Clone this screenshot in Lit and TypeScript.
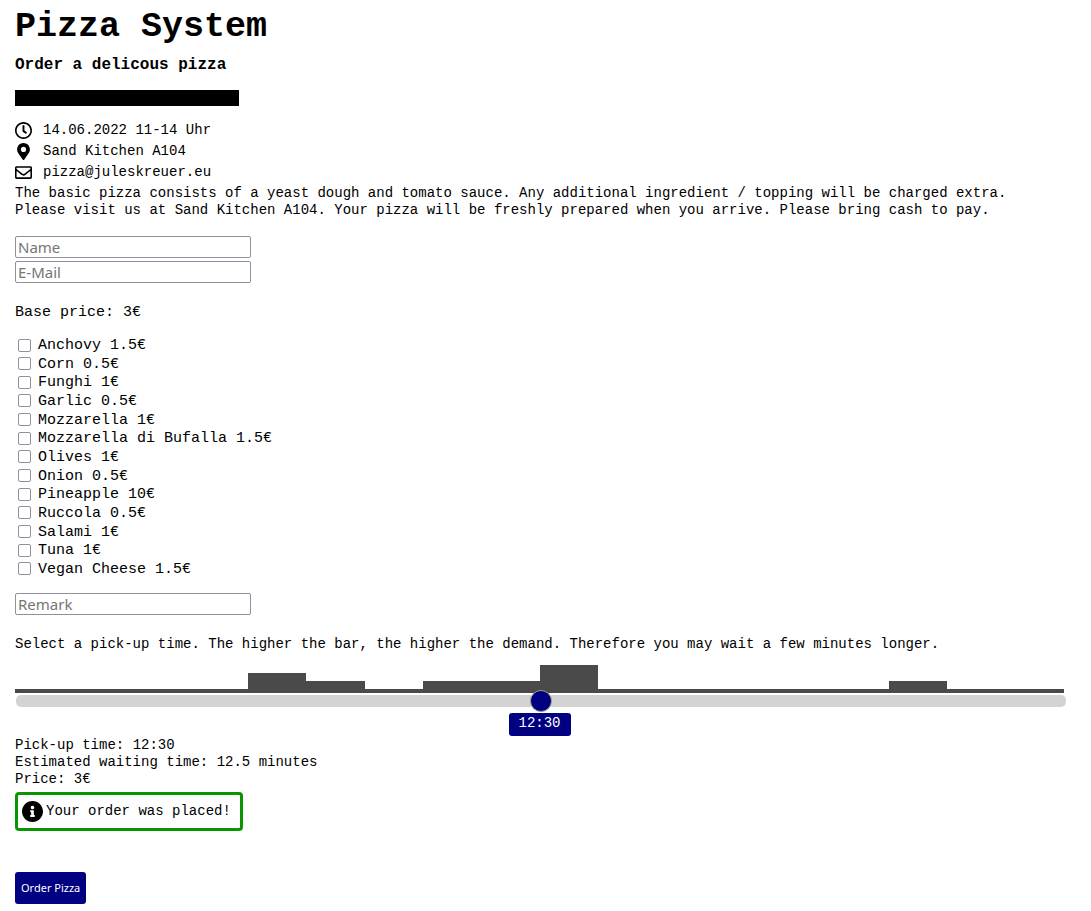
import { LitElement, html, css } from "lit";
import { customElement, state } from "lit/decorators.js";

interface Topping {
  name: string;
  price: number;
}

const BASE_PRICE = 3;
const OPENING_MINUTES = 11 * 60;
const SLOT_MINUTES = 10;
const WAITING_MINUTES = 12.5;

const TOPPINGS: Topping[] = [
  { name: "Anchovy", price: 1.5 },
  { name: "Corn", price: 0.5 },
  { name: "Funghi", price: 1 },
  { name: "Garlic", price: 0.5 },
  { name: "Mozzarella", price: 1 },
  { name: "Mozzarella di Bufalla", price: 1.5 },
  { name: "Olives", price: 1 },
  { name: "Onion", price: 0.5 },
  { name: "Pineapple", price: 10 },
  { name: "Ruccola", price: 0.5 },
  { name: "Salami", price: 1 },
  { name: "Tuna", price: 1 },
  { name: "Vegan Cheese", price: 1.5 },
];

// Orders already placed in each ten-minute slot.
const DEMAND = [0, 0, 0, 0, 2, 1, 0, 1, 1, 3, 0, 0, 0, 0, 0, 1, 0, 0];

const clockIcon = html`<svg class="icon" viewBox="8 8 496 496" aria-hidden="true">
  <path d="M256 8C119 8 8 119 8 256s111 248 248 248 248-111 248-248S393 8 256 8zm0 448c-110.5 0-200-89.5-200-200S145.5 56 256 56s200 89.5 200 200-89.5 200-200 200zm61.8-104.4l-84.9-61.7c-3.1-2.3-4.9-5.9-4.9-9.7V116c0-6.6 5.4-12 12-12h32c6.6 0 12 5.4 12 12v141.7l66.8 48.6c5.4 3.9 6.5 11.4 2.6 16.8L334.6 349c-3.9 5.3-11.4 6.5-16.8 2.6z"/>
</svg>`;

const markerIcon = html`<svg class="icon" viewBox="0 0 384 512" aria-hidden="true">
  <path d="M172.268 501.67C26.97 291.031 0 269.413 0 192 0 85.961 85.961 0 192 0s192 85.961 192 192c0 77.413-26.97 99.031-172.268 309.67-9.535 13.774-29.93 13.773-39.464 0zM192 272c44.183 0 80-35.817 80-80s-35.817-80-80-80-80 35.817-80 80 35.817 80 80 80z"/>
</svg>`;

const envelopeIcon = html`<svg class="icon" viewBox="0 0 512 512" aria-hidden="true">
  <path d="M464 64H48C21.49 64 0 85.49 0 112v288c0 26.51 21.49 48 48 48h416c26.51 0 48-21.49 48-48V112c0-26.51-21.49-48-48-48zm0 48v40.805c-22.422 18.259-58.168 46.651-134.587 106.49-16.841 13.247-50.201 45.072-73.413 44.701-23.208.375-56.579-31.459-73.413-44.701C106.18 199.465 70.425 171.067 48 152.805V112h416zM48 400V214.398c22.914 18.251 55.409 43.862 104.938 82.646 21.857 17.205 60.134 55.186 103.062 54.955 42.717.231 80.509-37.199 103.053-54.947 49.528-38.783 82.032-64.401 104.947-82.653V400H48z"/>
</svg>`;

const infoIcon = html`<svg class="icon large" viewBox="8 8 496 496" aria-hidden="true">
  <path d="M256 8C119.043 8 8 119.083 8 256c0 136.997 111.043 248 248 248s248-111.003 248-248C504 119.083 392.957 8 256 8zm0 110c23.196 0 42 18.804 42 42s-18.804 42-42 42-42-18.804-42-42 18.804-42 42-42zm56 254c0 6.627-5.373 12-12 12h-88c-6.627 0-12-5.373-12-12v-24c0-6.627 5.373-12 12-12h12v-64h-12c-6.627 0-12-5.373-12-12v-24c0-6.627 5.373-12 12-12h64c6.627 0 12 5.373 12 12v100h12c6.627 0 12 5.373 12 12v24z"/>
</svg>`;

@customElement("app-root")
export class AppRoot extends LitElement {
  @state() private slotIndex = 9;
  @state() private chosen: string[] = [];

  static styles = css`
    :host {
      display: block;
      box-sizing: border-box;
      padding: 7px 25px 7px 15px;
      background: #fff;
      color: #000;
      font-family: "Liberation Mono", monospace;
      font-size: 14px;
      line-height: 17px;
    }
    h1,
    h2,
    p,
    ul {
      margin: 0;
      padding: 0;
    }
    h1 {
      font-size: 35px;
      line-height: 40px;
    }
    h2 {
      margin-top: 8px;
      font-size: 16px;
      line-height: 20px;
    }
    .divider {
      width: 224px;
      max-width: 100%;
      height: 16px;
      margin: 15px 0 14px;
      background: #000;
    }
    .facts {
      list-style: none;
    }
    .facts li {
      display: flex;
      align-items: center;
      gap: 11px;
      height: 21px;
    }
    .facts a {
      color: inherit;
      text-decoration: none;
    }
    .icon {
      flex: none;
      width: 17px;
      height: 17px;
      fill: currentColor;
    }
    .icon.large {
      width: 21px;
      height: 21px;
    }
    .intro {
      margin-top: 2px;
    }
    .fields {
      display: flex;
      flex-direction: column;
      align-items: flex-start;
      gap: 3px;
      margin-top: 17px;
    }
    .toppings + .fields {
      margin-top: 14px;
    }
    .field {
      box-sizing: border-box;
      width: 236px;
      max-width: 100%;
      height: 22px;
      padding: 0 2px;
      border: 1px solid #8f8f9d;
      border-radius: 2px;
      background: #fff;
      color: #000;
      font-family: "Noto Sans", sans-serif;
      font-size: 15px;
    }
    .field::placeholder {
      color: #757575;
      opacity: 1;
    }
    .base {
      margin-top: 21px;
      font-size: 15px;
      line-height: 18px;
    }
    .toppings {
      display: flex;
      flex-direction: column;
      justify-content: space-between;
      min-height: 242px;
      margin-top: 15px;
      font-size: 15px;
      line-height: 18px;
      list-style: none;
    }
    .toppings label {
      display: inline-flex;
      align-items: center;
      gap: 7px;
      padding-left: 3px;
      vertical-align: top;
    }
    .toppings input {
      appearance: none;
      box-sizing: border-box;
      width: 13px;
      height: 13px;
      margin: 0 0 2px;
      border: 1px solid #8f8f9d;
      border-radius: 2px;
      background: #fff;
    }
    .toppings input:checked {
      border-color: navy;
      background: navy;
    }
    .prompt {
      display: block;
      margin-top: 21px;
    }
    .picker {
      position: relative;
      margin: 12px 2px 0 0;
      padding-bottom: 24px;
    }
    .chart {
      display: grid;
      grid-auto-flow: column;
      grid-auto-columns: 1fr;
      align-items: end;
      height: 28px;
    }
    .bar {
      background: #4a4a4a;
    }
    .slider {
      appearance: none;
      display: block;
      box-sizing: border-box;
      width: calc(100% + 1px);
      height: 22px;
      margin: -3px 0 0 1px;
      background: transparent;
      position: relative;
    }
    .slider::-webkit-slider-runnable-track {
      height: 12px;
      border-radius: 5px;
      background: lightgray;
    }
    .slider::-webkit-slider-thumb {
      appearance: none;
      box-sizing: border-box;
      width: 22px;
      height: 22px;
      margin-top: -5px;
      border: 1px solid #999;
      border-radius: 50%;
      background: navy;
    }
    .bubble {
      position: absolute;
      bottom: 0;
      box-sizing: border-box;
      min-width: 62px;
      padding: 2px 9px 4px;
      border-radius: 3px;
      background: navy;
      color: #fff;
      text-align: center;
      transform: translateX(-50%);
    }
    .summary {
      margin-top: 1px;
    }
    .notice {
      display: inline-flex;
      align-items: center;
      gap: 3px;
      box-sizing: border-box;
      min-height: 39px;
      margin-top: 4px;
      padding: 0 9px 0 4px;
      border: 3px solid #0a9600;
      border-radius: 4px;
    }
    .order {
      display: block;
      height: 32px;
      margin-top: 41px;
      padding: 0 6px 2px;
      border: 0;
      border-radius: 3px;
      background: navy;
      color: #fff;
      font-family: "Noto Sans", sans-serif;
      font-size: 11px;
    }
  `;

  private get pickupTime(): string {
    const minutes = OPENING_MINUTES + this.slotIndex * SLOT_MINUTES;
    return `${Math.floor(minutes / 60)}:${String(minutes % 60).padStart(2, "0")}`;
  }

  private get total(): number {
    return TOPPINGS.filter((t) => this.chosen.includes(t.name)).reduce(
      (sum, t) => sum + t.price,
      BASE_PRICE,
    );
  }

  private toggle(name: string) {
    this.chosen = this.chosen.includes(name)
      ? this.chosen.filter((n) => n !== name)
      : [...this.chosen, name];
  }

  private onSlide(event: Event) {
    this.slotIndex = Number((event.target as HTMLInputElement).value);
  }

  render() {
    return html`
      <header>
        <h1>Pizza System</h1>
        <h2>Order a delicous pizza</h2>
        <div class="divider"></div>
        <ul class="facts">
          <li>${clockIcon}<span>14.06.2022 11-14 Uhr</span></li>
          <li>${markerIcon}<span>Sand Kitchen A104</span></li>
          <li>${envelopeIcon}<a href="mailto:pizza@juleskreuer.eu">pizza@juleskreuer.eu</a></li>
        </ul>
        <p class="intro">
          The basic pizza consists of a yeast dough and tomato sauce. Any additional ingredient /
          topping will be charged extra.<br />
          Please visit us at Sand Kitchen A104. Your pizza will be freshly prepared when you
          arrive. Please bring cash to pay.
        </p>
      </header>
      <form @submit=${(e: Event) => e.preventDefault()}>
        <div class="fields">
          <input class="field" type="text" placeholder="Name" aria-label="Name" />
          <input class="field" type="email" placeholder="E-Mail" aria-label="E-Mail" />
        </div>
        <p class="base">Base price: ${BASE_PRICE}€</p>
        <ul class="toppings">
          ${TOPPINGS.map(
            (t) => html`<li>
              <label
                ><input
                  type="checkbox"
                  .checked=${this.chosen.includes(t.name)}
                  @change=${() => this.toggle(t.name)}
                /><span>${t.name} ${t.price}€</span></label
              >
            </li>`,
          )}
        </ul>
        <div class="fields">
          <input class="field" type="text" placeholder="Remark" aria-label="Remark" />
        </div>
        <label class="prompt" for="pickup"
          >Select a pick-up time. The higher the bar, the higher the demand. Therefore you may wait
          a few minutes longer.</label
        >
        <div class="picker">
          <div class="chart">
            ${DEMAND.map((n) => html`<div class="bar" style="height:${4 + n * 8}px"></div>`)}
          </div>
          <input
            class="slider"
            id="pickup"
            type="range"
            min="0"
            max=${DEMAND.length}
            .value=${String(this.slotIndex)}
            @input=${this.onSlide}
          />
          <output
            class="bubble"
            for="pickup"
            style="left:${(this.slotIndex / DEMAND.length) * 100}%"
            >${this.pickupTime}</output
          >
        </div>
        <div class="summary">
          <p>Pick-up time: ${this.pickupTime}</p>
          <p>Estimated waiting time: ${WAITING_MINUTES} minutes</p>
          <p>Price: ${this.total}€</p>
        </div>
        <div class="notice" role="status">${infoIcon}<span>Your order was placed!</span></div>
        <button class="order" type="submit">Order Pizza</button>
      </form>
    `;
  }
}
